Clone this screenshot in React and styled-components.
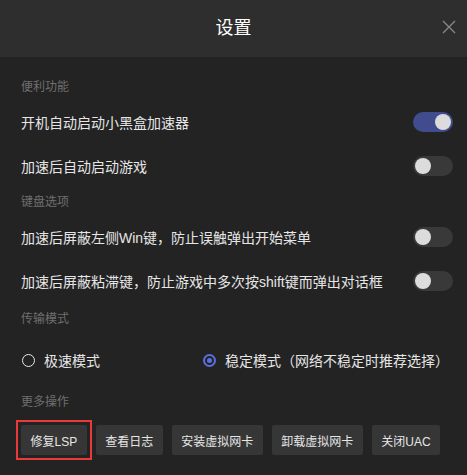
import React, { useState } from "react";
import styled, { createGlobalStyle } from "styled-components";

const GlobalStyle = createGlobalStyle`
  html, body {
    margin: 0;
    padding: 0;
    background: #232323;
  }
  body {
    font-family: "Liberation Sans", "Noto Sans CJK SC", sans-serif;
  }
`;

const Dialog = styled.div`
  width: 467px;
  height: 475px;
  background: #232323;
  color: #e8e8e8;
  overflow: hidden;
`;

const Header = styled.div`
  height: 57px;
  background: #2e2e2e;
  display: flex;
  align-items: center;
  justify-content: center;
  position: relative;

  h2 {
    margin: 0;
    font-size: 18px;
    font-weight: 400;
    color: #ffffff;
    line-height: 57px;
  }
`;

const Close = styled.button`
  position: absolute;
  right: 11px;
  top: 20px;
  width: 14px;
  height: 14px;
  padding: 0;
  border: none;
  background: none;
  cursor: pointer;
`;

const Body = styled.div`
  padding: 16px 14px 0 21px;
`;

const Label = styled.div`
  height: 20px;
  line-height: 20px;
  font-size: 12px;
  color: #6f6f6f;
  margin-top: ${(p) => p.$mt || 4}px;
  margin-bottom: 3px;
`;

const Row = styled.div`
  height: 44px;
  display: flex;
  align-items: center;
  justify-content: space-between;
  font-size: 14px;
  color: #e6e6e6;
`;

const Toggle = styled.div`
  width: 40px;
  height: 20px;
  border-radius: 10px;
  background: ${(p) => (p.$on ? "#404c8e" : "#393939")};
  position: relative;
  cursor: pointer;
  flex-shrink: 0;

  &::after {
    content: "";
    position: absolute;
    top: 2px;
    left: ${(p) => (p.$on ? "22px" : "2px")};
    width: 16px;
    height: 16px;
    border-radius: 50%;
    background: #dcdcdc;
  }
`;

const RadioRow = styled.div`
  height: 44px;
  margin-top: 9px;
  display: flex;
  align-items: center;
  font-size: 14px;
  color: #e6e6e6;
`;

const Option = styled.label`
  display: flex;
  align-items: center;
  gap: 9px;
  width: ${(p) => p.$w || "auto"};
  padding-left: 1px;
  cursor: pointer;
`;

const Dot = styled.span`
  width: 13px;
  height: 13px;
  box-sizing: border-box;
  border-radius: 50%;
  border: ${(p) => (p.$on ? "2px solid #5a6fe0" : "1.5px solid #e8e8e8")};
  display: flex;
  align-items: center;
  justify-content: center;

  &::after {
    content: "";
    display: ${(p) => (p.$on ? "block" : "none")};
    width: 5px;
    height: 5px;
    border-radius: 50%;
    background: #5a6fe0;
  }
`;

const Buttons = styled.div`
  display: flex;
  gap: 9px;
  margin-top: 13px;
`;

const Btn = styled.button`
  position: relative;
  height: 30px;
  padding: 0 9.5px;
  border: none;
  border-radius: 2px;
  background: #363636;
  color: #e6e6e6;
  font-family: inherit;
  font-size: 12px;
  cursor: pointer;

  &::after {
    content: "";
    display: ${(p) => (p.$marked ? "block" : "none")};
    position: absolute;
    inset: -5px;
    border: 2px solid #e83a3a;
    pointer-events: none;
  }
`;

const settings = [
  { label: "便利功能", mt: 4, rows: [["开机自动启动小黑盒加速器", true], ["加速后自动启动游戏", false]] },
  {
    label: "键盘选项",
    mt: 4,
    rows: [
      ["加速后屏蔽左侧Win键，防止误触弹出开始菜单", false],
      ["加速后屏蔽粘滞键，防止游戏中多次按shift键而弹出对话框", false],
    ],
  },
];

const actions = ["修复LSP", "查看日志", "安装虚拟网卡", "卸载虚拟网卡", "关闭UAC"];

export default function App() {
  const [mode, setMode] = useState(1);

  return (
    <Dialog>
      <GlobalStyle />
      <Header>
        <h2>设置</h2>
        <Close>
          <svg width="14" height="14" viewBox="0 0 14 14">
            <path d="M1 1 L13 13 M13 1 L1 13" stroke="#8a8a8a" strokeWidth="1.3" fill="none" />
          </svg>
        </Close>
      </Header>
      <Body>
        {settings.map((s) => (
          <div key={s.label}>
            <Label $mt={s.mt}>{s.label}</Label>
            {s.rows.map(([text, on]) => (
              <Row key={text}>
                <span>{text}</span>
                <Toggle $on={on} />
              </Row>
            ))}
          </div>
        ))}
        <Label $mt={6}>传输模式</Label>
        <RadioRow>
          <Option $w="180px" onClick={() => setMode(0)}>
            <Dot $on={mode === 0} />
            极速模式
          </Option>
          <Option onClick={() => setMode(1)}>
            <Dot $on={mode === 1} />
            稳定模式（网络不稳定时推荐选择）
          </Option>
        </RadioRow>
        <Label $mt={10}>更多操作</Label>
        <Buttons>
          {actions.map((a, i) => (
            <Btn key={a} $marked={i === 0}>
              {a}
            </Btn>
          ))}
        </Buttons>
      </Body>
    </Dialog>
  );
}
